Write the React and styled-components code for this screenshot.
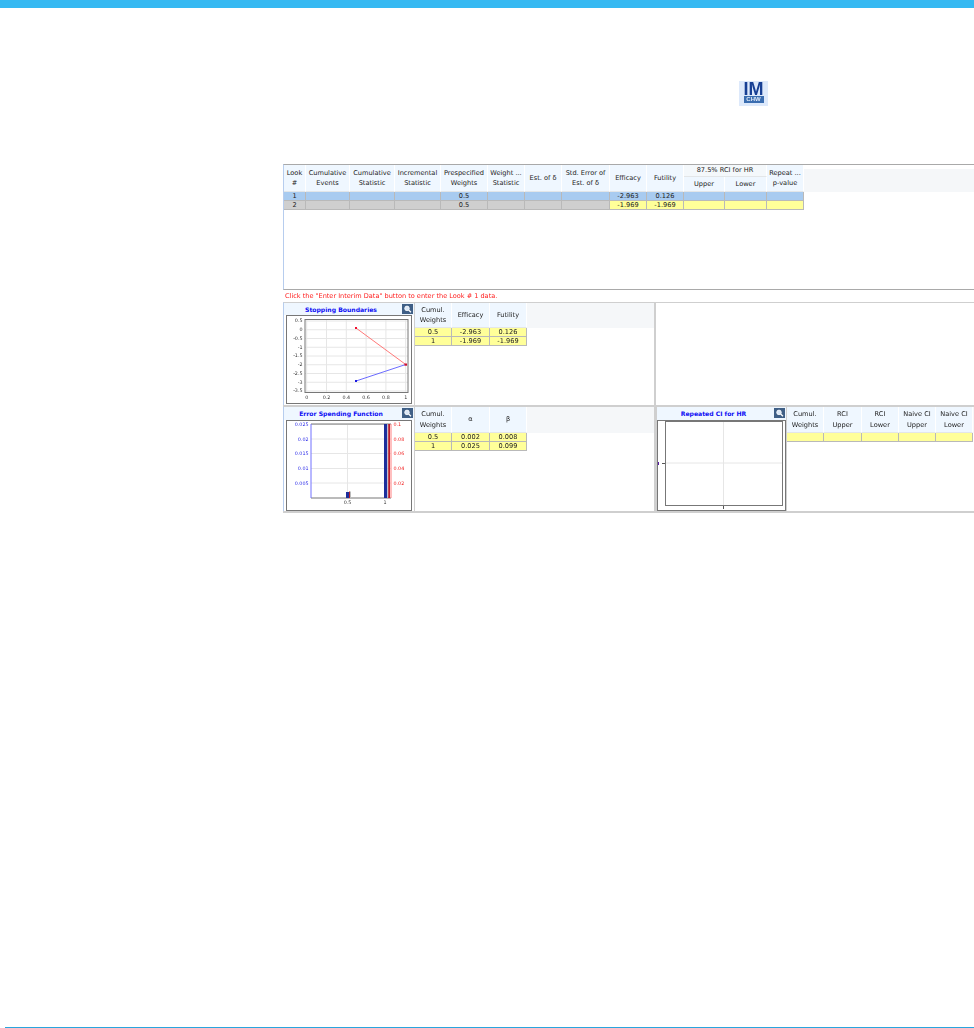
import React from "react";
import styled, { createGlobalStyle } from "styled-components";

const Global = createGlobalStyle`
  html, body { margin: 0; padding: 0; background: #fff; }
  body { font-family: "DejaVu Sans", "Liberation Sans", sans-serif; }
`;

const Page = styled.div`
  width: 974px;
  height: 1028px;
  display: flex;
  flex-direction: column;
  overflow: hidden;
`;
const TopBar = styled.div`
  height: 8px;
  background: #36b9f2;
  flex: none;
`;
const IconRow = styled.div`
  display: flex;
  padding: 73px 0 0 739px;
  flex: none;
`;
const LogoTile = styled.div`
  width: 29px;
  height: 25px;
  background: #dde9fb;
  display: flex;
  flex-direction: column;
  align-items: center;
  filter: blur(0.35px);
`;
const LogoBig = styled.span`
  font: bold 18px/13px "Liberation Sans", sans-serif;
  color: #173f94;
  margin-top: 2px;
  height: 13px;
`;
const LogoSmall = styled.span`
  font: bold 6px/7px "Liberation Sans", sans-serif;
  color: #dfe9f7;
  background: #3a6db0;
  width: 20px;
  height: 7px;
  text-align: center;
`;
const Main = styled.div`
  margin: 58px 0 0 283px;
  flex: none;
  color: #222;
  font-size: 6.6px;
  filter: blur(0.3px);
`;
const TopSection = styled.div`
  height: 124px;
  border-top: 1px solid #a9a9a9;
  border-bottom: 1px solid #a9a9a9;
  border-left: 1px solid #b7cdee;
  background: linear-gradient(#fff 4px, #f5f7f9 4px 27px, #fff 27px);
`;
const Message = styled.div`
  height: 12px;
  line-height: 12px;
  padding-left: 2px;
  color: #ff2020;
  font-size: 6.55px;
  white-space: nowrap;
`;
const Grid = styled.table`
  border-collapse: separate;
  border-spacing: 0;
  table-layout: fixed;
  width: ${(p) => p.$width}px;
`;
const Head = styled.th`
  font-weight: normal;
  background: ${(p) => (p.$plain ? "#f4f8fb" : "#eff7ff")};
  color: #222;
  border-right: 1px solid #fff;
  border-bottom: 1px solid #e3e6e8;
  padding: 0;
  line-height: 10.5px;
  text-align: center;
  vertical-align: middle;
  height: ${(p) => p.$h || 12}px;
  white-space: nowrap;
  overflow: hidden;
`;
const Cell = styled.td`
  background: ${(p) => p.$bg};
  border-right: 1px solid #b9b9b9;
  border-bottom: 1px solid #b9b9b9;
  color: #222;
  padding: 0;
  height: 8px;
  line-height: 8px;
  font-size: 6.6px;
  text-align: center;
  overflow: hidden;
`;
const PanelRow = styled.div`
  display: grid;
  grid-template-columns: 132px 241px 1fr;
  height: ${(p) => p.$h}px;
  border-bottom: ${(p) => p.$line}px solid #cfcfcf;
`;
const ChartPanel = styled.div`
  border-top: 1px solid #cfcfcf;
  border-right: 1px solid #cfcfcf;
  border-left: 1px solid ${(p) => (p.$tight ? "#cfcfcf" : "#b7cdee")};
  display: flex;
  flex-direction: column;
  align-items: flex-start;
  box-sizing: border-box;
  padding-left: ${(p) => (p.$tight ? 0 : 2)}px;
  height: 100%;
`;
const ChartTitleBar = styled.div`
  align-self: stretch;
  margin-left: ${(p) => (p.$tight ? 0 : -2)}px;
  height: ${(p) => p.$h}px;
  flex: none;
  background: #eff7ff;
  display: flex;
  align-items: center;
  position: relative;
  justify-content: center;
  padding-right: 16px;
`;
const ChartTitle = styled.span`
  font-weight: bold;
  font-size: 6.1px;
  color: #0c0cf4;
`;
const ZoomButton = styled.span`
  position: absolute;
  right: 1px;
  top: 1px;
  width: 11px;
  height: 10px;
  background: #3f5f86;
  display: flex;
  align-items: center;
  justify-content: center;
`;
const ChartFrame = styled.div`
  border: 1px solid #777;
  width: ${(p) => p.$w}px;
  height: ${(p) => p.$h}px;
  box-sizing: border-box;
  background: #fff;
  flex: none;
  display: flex;
`;
const TablePanel = styled.div`
  border-top: 1px solid #cfcfcf;
  border-right: ${(p) => (p.$edge ? 0 : 2)}px solid #cfcfcf;
  background: linear-gradient(#f5f7f9 ${(p) => p.$h}px, #fff ${(p) => p.$h}px);
  height: 100%;
  box-sizing: border-box;
  overflow: hidden;
`;
const BlankPanel = styled.div`
  border-top: 1px solid #cfcfcf;
`;
const SplitPanel = styled.div`
  display: grid;
  grid-template-columns: 131px 1fr;
`;
const BottomRule = styled.div`
  margin: auto 0 0 5px;
  height: 1px;
  background: #2aa5dd;
  flex: none;
`;

const ZoomGlyph = () => (
  <svg width="9" height="8" viewBox="0 0 9 8">
    <circle cx="4" cy="3.4" r="2.3" fill="#dbe8f8" stroke="#fff" strokeWidth="0.8" />
    <path d="M5.6 5 L8 7.2" stroke="#fff" strokeWidth="1.2" />
  </svg>
);

const Sel = "#a8cbf0", Gr = "#cfcfcf", Ye = "#ffff99";

const MainTable = () => {
  const widths = [22, 44, 45, 46, 47, 37, 37, 48, 37, 37, 41, 42, 37];
  const rows = [
    [Sel, ["1", "", "", "", "0.5", "", "", "", "-2.963", "0.126", "", "", ""]],
    [Gr, ["2", "", "", "", "0.5", "", "", "", "-1.969", "-1.969", "", "", ""]],
  ];
  const heads = [
    ["Look", "#"], ["Cumulative", "Events"], ["Cumulative", "Statistic"], ["Incremental", "Statistic"],
    ["Prespecified", "Weights"], ["Weight ...", "Statistic"], ["Est. of δ"], ["Std. Error of", "Est. of δ"],
    ["Efficacy"], ["Futility"],
  ];
  return (
    <Grid $width={520}>
      <colgroup>{widths.map((w, i) => <col key={i} style={{ width: w }} />)}</colgroup>
      <thead>
        <tr>
          {heads.map((h, i) => (
            <Head key={i} rowSpan={2}>
              {h[0]}{h[1] && <br />}{h[1]}
            </Head>
          ))}
          <Head colSpan={2} $h={11} $plain>87.5% RCI for HR</Head>
          <Head rowSpan={2}>Repeat ...<br />p-value</Head>
        </tr>
        <tr>
          <Head $h={14}>Upper</Head>
          <Head $h={14}>Lower</Head>
        </tr>
      </thead>
      <tbody>
        {rows.map(([bg, vals], r) => (
          <tr key={r}>
            {vals.map((v, i) => (
              <Cell key={i} $bg={r === 1 && i >= 8 ? Ye : bg}>{v}</Cell>
            ))}
          </tr>
        ))}
      </tbody>
    </Grid>
  );
};

const SmallTable = ({ widths, heads, rows, h }) => (
  <Grid $width={widths.reduce((a, b) => a + b, 0)}>
    <colgroup>{widths.map((w, i) => <col key={i} style={{ width: w }} />)}</colgroup>
    <thead>
      <tr>
        {heads.map((x, i) => (
          <Head key={i} $h={h}>
            {x[0]}{x[1] && <br />}{x[1]}
          </Head>
        ))}
      </tr>
    </thead>
    <tbody>
      {rows.map((row, r) => (
        <tr key={r}>
          {row.map((v, i) => <Cell key={i} $bg={Ye}>{v}</Cell>)}
        </tr>
      ))}
    </tbody>
  </Grid>
);

const Svg = styled.svg`
  display: block;
  font-family: "DejaVu Sans", sans-serif;
  font-size: 4.8px;
`;

const StoppingChart = () => {
  const ys = ["0.5", "0", "-0.5", "-1", "-1.5", "-2", "-2.5", "-3", "-3.5"];
  const xs = ["0", "0.2", "0.4", "0.6", "0.8", "1"];
  const X = (i) => 19.7 + i * 19.8;
  const Y = (i) => 4.7 + i * 8.75;
  return (
    <Svg width="124" height="87" viewBox="0 0 124 87">
      {ys.map((_, i) => <line key={i} x1="18" x2="121" y1={Y(i) + 0.3} y2={Y(i) + 0.3} stroke="#e6e6e6" strokeWidth="1" />)}
      {xs.map((_, i) => <line key={i} x1={X(i)} x2={X(i)} y1="4" y2="76" stroke="#e6e6e6" strokeWidth="1" />)}
      <rect x="18" y="3.5" width="103" height="73" fill="none" stroke="#777" strokeWidth="1" />
      {ys.map((t, i) => <text key={t} x="15.5" y={Y(i) + 1.7} textAnchor="end" fill="#333">{t}</text>)}
      {xs.map((t, i) => <text key={t} x={X(i)} y="82.5" textAnchor="middle" fill="#333">{t}</text>)}
      <polyline points="69,12 118.7,48.5" fill="none" stroke="#ff6a6a" strokeWidth="0.9" />
      <polyline points="69,65 118.7,48.5" fill="none" stroke="#5a5aff" strokeWidth="0.9" />
      <rect x="68" y="11" width="2" height="2" fill="#f01030" />
      <rect x="68" y="64" width="2" height="2" fill="#1a1ae0" />
      <rect x="117.5" y="47.5" width="2.5" height="2.2" fill="#d01030" />
    </Svg>
  );
};

const ErrorChart = () => {
  const ys = [3.5, 18, 32.5, 47.5, 62];
  const l = ["0.025", "0.02", "0.015", "0.01", "0.005"];
  const r = ["0.1", "0.08", "0.06", "0.04", "0.02"];
  return (
    <Svg width="124" height="89" viewBox="0 0 124 89">
      {ys.map((y) => <line key={y} x1="24" x2="104" y1={y} y2={y} stroke="#e6e6e6" strokeWidth="1" />)}
      <line x1="60.5" x2="60.5" y1="3" y2="77" stroke="#e6e6e6" strokeWidth="1" />
      <line x1="24" x2="104" y1="3" y2="3" stroke="#777" strokeWidth="1" />
      <line x1="24" x2="104" y1="77" y2="77" stroke="#777" strokeWidth="1" />
      <line x1="24" x2="24" y1="3" y2="77" stroke="#7070ff" strokeWidth="1" />
      <line x1="104" x2="104" y1="3" y2="77" stroke="#ff8080" strokeWidth="1" />
      {l.map((t, i) => <text key={t} x="21.5" y={ys[i] + 1.8} textAnchor="end" fill="#2a2ae8">{t}</text>)}
      {r.map((t, i) => <text key={t} x="106.5" y={ys[i] + 1.8} fill="#f02020">{t}</text>)}
      <rect x="59" y="71" width="3" height="6" fill="#1c2f9c" />
      <rect x="62" y="70.5" width="1" height="6.5" fill="#b02030" />
      <rect x="63" y="70.5" width="1" height="6.5" fill="#bbb" />
      <rect x="97" y="3" width="3.4" height="74" fill="#1c2f9c" />
      <rect x="100.4" y="3" width="0.8" height="74" fill="#cfcfcf" />
      <rect x="101.2" y="3" width="1.8" height="74" fill="#b81c2c" />
      <text x="60.5" y="82.5" textAnchor="middle" fill="#333">0.5</text>
      <text x="98" y="82.5" textAnchor="middle" fill="#333">1</text>
    </Svg>
  );
};

const RepeatedChart = () => (
  <Svg width="127" height="89" viewBox="0 0 127 89">
    <line x1="7" x2="124" y1="42" y2="42" stroke="#e6e6e6" strokeWidth="1" />
    <line x1="65.5" x2="65.5" y1="1" y2="84" stroke="#e6e6e6" strokeWidth="1" />
    <rect x="7.5" y="0.5" width="117" height="84" fill="none" stroke="#777" strokeWidth="1" />
    <line x1="4" x2="7" y1="42.5" y2="42.5" stroke="#555" strokeWidth="1" />
    <line x1="0.5" x2="0.5" y1="41" y2="44" stroke="#5a1aa8" strokeWidth="1" />
    <line x1="65.5" x2="65.5" y1="85" y2="88" stroke="#555" strokeWidth="1" />
  </Svg>
);

export default function App() {
  return (
    <Page>
      <Global />
      <TopBar />
      <IconRow>
        <LogoTile>
          <LogoBig>IM</LogoBig>
          <LogoSmall>CHW</LogoSmall>
        </LogoTile>
      </IconRow>
      <Main>
        <TopSection><MainTable /></TopSection>
        <Message>Click the "Enter Interim Data" button to enter the Look # 1 data.</Message>
        <PanelRow $h={103} $line={1}>
          <ChartPanel>
            <ChartTitleBar $h={12}>
              <ChartTitle>Stopping Boundaries</ChartTitle>
              <ZoomButton><ZoomGlyph /></ZoomButton>
            </ChartTitleBar>
            <ChartFrame $w={126} $h={89}><StoppingChart /></ChartFrame>
          </ChartPanel>
          <TablePanel $h={25}>
            <SmallTable
              h={24}
              widths={[37, 38, 37]}
              heads={[["Cumul.", "Weights"], ["Efficacy"], ["Futility"]]}
              rows={[["0.5", "-2.963", "0.126"], ["1", "-1.969", "-1.969"]]}
            />
          </TablePanel>
          <BlankPanel />
        </PanelRow>
        <PanelRow $h={105} $line={2}>
          <ChartPanel>
            <ChartTitleBar $h={13}>
              <ChartTitle>Error Spending Function</ChartTitle>
              <ZoomButton><ZoomGlyph /></ZoomButton>
            </ChartTitleBar>
            <ChartFrame $w={126} $h={91}><ErrorChart /></ChartFrame>
          </ChartPanel>
          <TablePanel $h={26}>
            <SmallTable
              h={25}
              widths={[37, 38, 37]}
              heads={[["Cumul.", "Weights"], ["α"], ["β"]]}
              rows={[["0.5", "0.002", "0.008"], ["1", "0.025", "0.099"]]}
            />
          </TablePanel>
          <SplitPanel>
            <ChartPanel $tight>
              <ChartTitleBar $tight $h={13}>
                <ChartTitle>Repeated CI for HR</ChartTitle>
                <ZoomButton><ZoomGlyph /></ZoomButton>
              </ChartTitleBar>
              <ChartFrame $w={129} $h={91}><RepeatedChart /></ChartFrame>
            </ChartPanel>
            <TablePanel $h={26} $edge>
              <SmallTable
                h={25}
                widths={[37, 38, 37, 37, 37]}
                heads={[["Cumul.", "Weights"], ["RCI", "Upper"], ["RCI", "Lower"], ["Naive CI", "Upper"], ["Naive CI", "Lower"]]}
                rows={[["", "", "", "", ""]]}
              />
            </TablePanel>
          </SplitPanel>
        </PanelRow>
      </Main>
      <BottomRule />
    </Page>
  );
}
